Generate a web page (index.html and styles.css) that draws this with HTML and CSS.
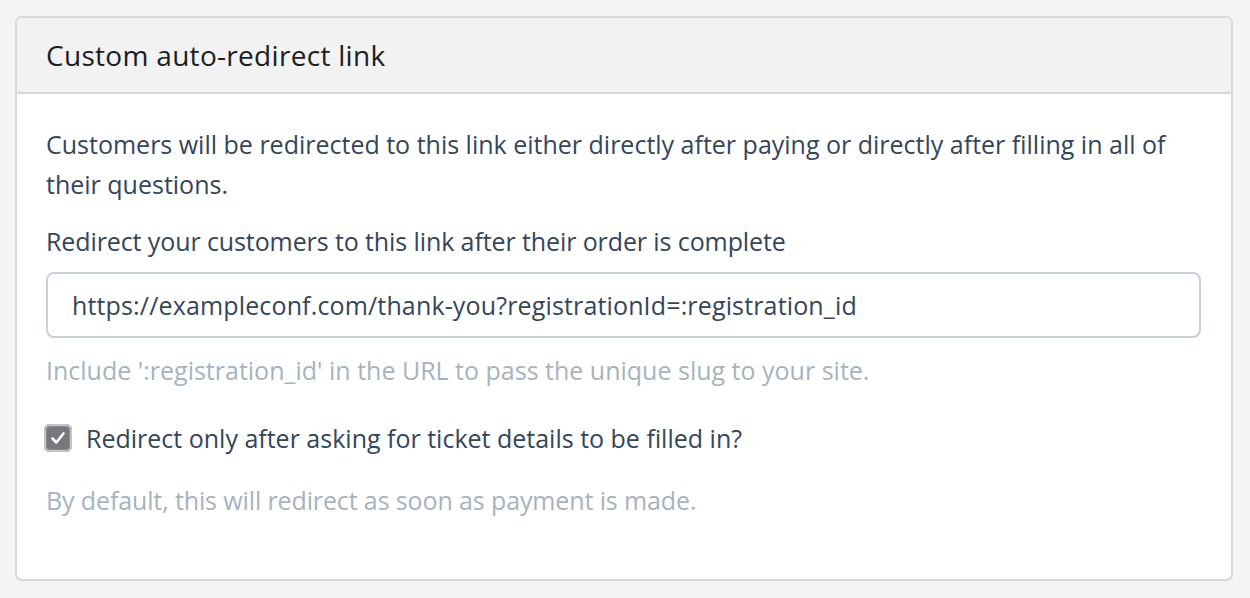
FILE: index.html
```html
<!DOCTYPE html>
<html>
<head>
<meta charset="utf-8">
<link rel="stylesheet" href="styles.css">
</head>
<body>
<div class="page">
  <section class="card">
    <header class="card-head">
      <h2 class="card-title">Custom auto-redirect link</h2>
    </header>
    <div class="card-body">
      <p class="intro">Customers will be redirected to this link either directly after paying or directly after filling in all of their questions.</p>
      <label class="field-label">Redirect your customers to this link after their order is complete</label>
      <div class="input">https://exampleconf.com/thank-you?registrationId=:registration_id</div>
      <p class="help help-url">Include ':registration_id' in the URL to pass the unique slug to your site.</p>
      <div class="check-row">
        <span class="checkbox">
          <svg viewBox="0 0 28 28" width="28" height="28"><path d="M8.5 14.5 L12.3 18.5 L19.5 9.5" fill="none" stroke="#fff" stroke-width="2.6" stroke-linecap="round" stroke-linejoin="round"/></svg>
        </span>
        <span class="check-label">Redirect only after asking for ticket details to be filled in?</span>
      </div>
      <p class="help help-default">By default, this will redirect as soon as payment is made.</p>
    </div>
  </section>
</div>
</body>
</html>
```
FILE: styles.css
```css
html, body {
  margin: 0;
  padding: 0;
  background: #f3f4f6;
}
body {
  font-family: "Open Sans", "DejaVu Sans", sans-serif;
  color: #34465a;
}
.page {
  padding: 16px 17px 16px 15px;
}
.card {
  background: #fff;
  border: 2px solid #d8d8d8;
  border-radius: 7px;
  overflow: hidden;
  height: 565px;
  box-sizing: border-box;
}
.card-head {
  background: #f2f2f2;
  border-bottom: 2px solid #d8d8d8;
  height: 76px;
  box-sizing: border-box;
  display: flex;
  align-items: center;
  padding: 0 29px;
}
.card-title {
  margin: 0;
  font-size: 28px;
  font-weight: 400;
  color: #1a1e22;
  letter-spacing: 0.3px;
}
.card-body {
  padding: 30px 30px 0 29px;
}
.intro {
  margin: 0;
  font-size: 25px;
  line-height: 40px;
  letter-spacing: 0;
}
.field-label {
  display: block;
  margin-top: 21px;
  font-size: 25px;
  line-height: 32px;
  letter-spacing: -0.1px;
}
.input {
  margin-top: 15px;
  height: 66px;
  box-sizing: border-box;
  border: 2px solid #c9d0d8;
  border-radius: 8px;
  display: flex;
  align-items: center;
  padding: 0 24px;
  font-size: 25px;
  letter-spacing: 0.15px;
  color: #34465a;
}
.help {
  margin: 0;
  font-size: 25px;
  line-height: 32px;
  color: #a7b3be;
  letter-spacing: 0;
}
.help-url {
  margin-top: 16px;
}
.check-row {
  display: flex;
  align-items: center;
  gap: 14px;
  margin-top: 36px;
  margin-left: -2px;
}
.checkbox {
  width: 28px;
  height: 28px;
  box-sizing: border-box;
  border-radius: 6px;
  background: #76767c;
  box-shadow: 0 0 0 2px #c4c4c8 inset, 0 0 0 3px #8a8a90 inset;
  display: flex;
  flex-shrink: 0;
}
.checkbox svg {
  display: block;
}
.check-label {
  font-size: 25px;
  line-height: 32px;
  letter-spacing: 0;
}
.help-default {
  margin-top: 30px;
  letter-spacing: -0.12px;
}
```
